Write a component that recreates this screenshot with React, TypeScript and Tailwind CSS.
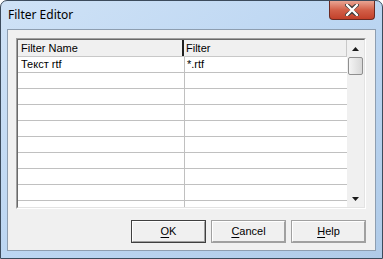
const rows = [
  { name: "Текст rtf", filter: "*.rtf" },
  { name: "", filter: "" },
  { name: "", filter: "" },
  { name: "", filter: "" },
  { name: "", filter: "" },
  { name: "", filter: "" },
  { name: "", filter: "" },
  { name: "", filter: "" },
  { name: "", filter: "" },
  { name: "", filter: "" },
];

function DlgButton({ label, underline, isDefault }: { label: string; underline: string; isDefault?: boolean }) {
  const rest = label.slice(1);
  return (
    <button
      className={
        "h-[23px] w-[75px] border bg-[#f0f0f0] p-0 " +
        (isDefault ? "border-[#404040]" : "border-[#a0a0a0]")
      }
    >
      <span className="flex h-full w-full items-center justify-center border-t border-l border-t-white border-l-white border-r border-b border-r-[#a0a0a0] border-b-[#a0a0a0] text-[11px] text-black">
        <span className="underline underline-offset-[2px]">{underline}</span>
        {rest}
      </span>
    </button>
  );
}

export default function App() {
  return (
    <div className="flex h-[259px] w-[383px] flex-col overflow-hidden rounded-t-[7px] border border-[#3c4b5c] bg-gradient-to-br from-[#cfe2f6] via-[#bcd6f2] to-[#b0cbe8] font-['Liberation_Sans',Arial,sans-serif]">
      <div className="flex h-[28px] shrink-0 items-start justify-between">
        <span className="pl-[7px] pt-[6px] font-['Noto_Sans',sans-serif] text-[12px] leading-[16px] text-black">
          Filter Editor
        </span>
        <div className="mr-[7px] flex h-[19px] w-[46px] items-center justify-center rounded-b-[4px] border border-t-0 border-[#6b2a22] bg-gradient-to-b from-[#e8a493] via-[#d25f48] to-[#c2402a]">
          <svg width="14" height="12" viewBox="0 0 14 12">
            <path d="M2 1 L7 5 L12 1 M2 11 L7 7 L12 11" stroke="#3a3a3a" strokeWidth="4" fill="none" strokeLinecap="round" />
            <path d="M2 1 L12 11 M12 1 L2 11" stroke="#ffffff" strokeWidth="2.4" fill="none" strokeLinecap="round" />
          </svg>
        </div>
      </div>
      <div className="mx-[6px] mb-[7px] flex flex-1 flex-col border border-[#8e9eb0] bg-[#f0f0f0] px-[8px] pt-[8px]">
        <div className="h-[171px] w-[350px] border border-t-[#a0a0a0] border-l-[#a0a0a0] border-r-white border-b-white">
          <div className="flex h-full w-full border border-t-[#696969] border-l-[#696969] border-r-[#e3e3e3] border-b-[#e3e3e3] bg-white">
            <div className="flex-1 overflow-hidden text-[11px] leading-[15px] text-black">
              <div className="flex h-[17px] border-b border-[#c8c8c8] bg-[#f0f0f0]">
                <div className="w-[166px] border-r-2 border-[#202020] pl-[3px] pt-[1px]">Filter Name</div>
                <div className="flex-1 border-r border-[#c8c8c8] pl-[2px] pt-[1px]">Filter</div>
              </div>
              {rows.map((r, i) => (
                <div key={i} className="flex h-[16px] border-b border-[#c0c0c0]">
                  <div className="w-[167px] border-r border-[#c0c0c0] pl-[3px]">{r.name}</div>
                  <div className="flex-1 pl-[2px]">{r.filter}</div>
                </div>
              ))}
            </div>
            <div className="flex w-[17px] flex-col bg-[#f0f0f0]">
              <div className="flex h-[17px] items-center justify-center">
                <svg width="7" height="4" viewBox="0 0 7 4">
                  <path d="M3.5 0 L7 4 L0 4 Z" fill="#1a1a1a" />
                </svg>
              </div>
              <div className="mx-[1px] h-[18px] rounded-[2px] border border-[#8f8f8f] bg-gradient-to-r from-[#f4f4f4] to-[#d8d8d8]" />
              <div className="flex-1" />
              <div className="flex h-[17px] items-center justify-center">
                <svg width="7" height="4" viewBox="0 0 7 4">
                  <path d="M0 0 L7 0 L3.5 4 Z" fill="#1a1a1a" />
                </svg>
              </div>
            </div>
          </div>
        </div>
        <div className="mt-[11px] flex justify-end gap-[5px] pr-[1px]">
          <DlgButton label="OK" underline="O" isDefault />
          <DlgButton label="Cancel" underline="C" />
          <DlgButton label="Help" underline="H" />
        </div>
      </div>
    </div>
  );
}
